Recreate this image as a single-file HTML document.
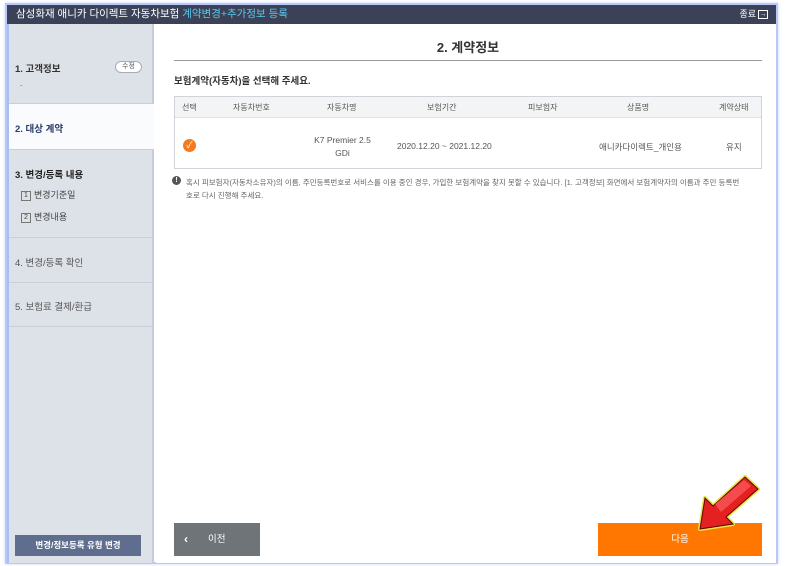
<!DOCTYPE html>
<html><head><meta charset="utf-8"><style>
*{margin:0;padding:0;box-sizing:border-box}
body{width:785px;height:566px;background:#fff;font-family:"Liberation Sans","Noto Sans CJK KR",sans-serif;position:relative;overflow:hidden}
.win{position:absolute;left:5px;top:3px;width:773px;height:561px;border:2px solid #b8c8f8;box-shadow:0 0 3px #c8d4ff}
.hdr{position:absolute;left:7px;top:5px;width:769px;height:19px;background:#3b4258;color:#fff;font-size:10.5px;line-height:19px;padding-left:9px}
.hdr b{font-weight:normal;color:#5ec7e8}
.close{position:absolute;right:8px;top:0;font-size:9px}
.close span{display:inline-block;width:10px;height:9px;border:1px solid #fff;vertical-align:middle;font-size:7px;line-height:7px;text-align:center;margin-left:2px}
.side{position:absolute;left:7px;top:24px;width:147px;height:539px;background:#dde1e8;border-right:2px solid #c7cdd8;border-left:2px solid #a9bdf0}
.sec{position:absolute;left:0;width:145px;border-bottom:1px solid #c9ced8;font-size:9.5px;color:#333}
.sec .t{position:absolute;left:6px;font-weight:bold}
.main{position:absolute;left:156px;top:24px;width:620px;height:539px;background:#fff}
.sm{font-size:9px;color:#444}
.box{display:inline-block;width:10px;height:10px;border:1px solid #777;font-size:7px;line-height:8px;text-align:center;margin-right:3px;vertical-align:middle}
</style></head><body>
<div class="win"></div>
<div class="hdr">삼성화재 애니카 다이렉트 자동차보험 <b>계약변경+추가정보 등록</b><div class="close">종료<span>→</span></div></div>
<div class="side">
 <div class="sec" style="top:0;height:80px"><div class="t" style="top:37px">1. 고객정보</div>
  <div style="position:absolute;left:106px;top:37px;width:27px;height:12px;border:1px solid #aab;border-radius:7px;background:#fff;font-size:7px;text-align:center;line-height:10px;color:#555">수정</div>
  <div style="position:absolute;left:11px;top:55px;font-size:8px">.</div></div>
 <div class="sec" style="top:80px;height:46px;background:#fafbfc"><div class="t" style="top:17px;color:#2b3a6b">2. 대상 계약</div></div>
 <div class="sec" style="top:126px;height:88px"><div class="t" style="top:17px;color:#222">3. 변경/등록 내용</div>
  <div class="sm" style="position:absolute;left:12px;top:38px"><span class="box">1</span>변경기준일</div>
  <div class="sm" style="position:absolute;left:12px;top:60px"><span class="box">2</span>변경내용</div></div>
 <div class="sec" style="top:214px;height:45px"><div class="t" style="top:17px;font-weight:normal;color:#555">4. 변경/등록 확인</div></div>
 <div class="sec" style="top:259px;height:44px"><div class="t" style="top:16px;font-weight:normal;color:#555">5. 보험료 결제/환급</div></div>
 <div style="position:absolute;left:6px;top:511px;width:126px;height:21px;background:#5f6e8e;color:#fff;font-size:8.5px;text-align:center;line-height:21px;font-weight:bold">변경/정보등록 유형 변경</div>
</div>
<div class="main">
 <div style="position:absolute;left:18px;width:588px;top:13px;text-align:center;font-size:13px;font-weight:bold;color:#333">2. 계약정보</div>
 <div style="position:absolute;left:18px;width:588px;top:36px;border-top:1px solid #999"></div>
 <div style="position:absolute;left:18px;top:49px;font-size:9.5px;font-weight:bold;color:#333">보험계약(자동차)을 선택해 주세요.</div>
 <div style="position:absolute;left:18px;top:72px;width:588px;height:73px;border:1px solid #cfd3da;font-size:8px;color:#555">
  <div style="height:21px;background:#f3f4f6;border-bottom:1px solid #dde0e5;position:relative">
   <span style="position:absolute;left:7px;top:5px">선택</span><span style="position:absolute;left:58px;top:5px">자동차번호</span><span style="position:absolute;left:152px;top:5px">자동차명</span><span style="position:absolute;left:252px;top:5px">보험기간</span><span style="position:absolute;left:353px;top:5px">피보험자</span><span style="position:absolute;left:452px;top:5px">상품명</span><span style="position:absolute;left:544px;top:5px">계약상태</span>
  </div>
  <div style="position:absolute;left:8px;top:42px;width:13px;height:13px;border-radius:50%;background:#f47a1f;color:#fff;font-size:9px;text-align:center;line-height:13px">✓</div>
  <div style="position:absolute;left:130px;top:37px;width:75px;text-align:center;font-size:8.5px;line-height:13px">K7 Premier 2.5<br>GDi</div>
  <div style="position:absolute;left:222px;top:44px;font-size:8.5px">2020.12.20 ~ 2021.12.20</div>
  <div style="position:absolute;left:424px;top:44px;font-size:8.5px">애니카다이렉트_개인용</div>
  <div style="position:absolute;left:551px;top:44px;font-size:8.5px">유지</div>
 </div>
 <div style="position:absolute;left:16px;top:152px;width:9px;height:9px;border-radius:50%;background:#555;color:#fff;font-size:7px;text-align:center;line-height:9px;font-weight:bold">!</div>
 <div style="position:absolute;left:30px;top:152px;width:560px;font-size:7.5px;line-height:13px;color:#666">혹시 피보험자(자동차소유자)의 이름, 주민등록번호로 서비스를 이용 중인 경우, 가입한 보험계약을 찾지 못할 수 있습니다. [1. 고객정보] 화면에서 보험계약자의 이름과 주민 등록번호로 다시 진행해 주세요.</div>
 <div style="position:absolute;left:18px;top:499px;width:86px;height:33px;background:#6f7479;color:#fff;font-size:9.5px;line-height:33px"><span style="position:absolute;left:10px;font-size:12px;font-weight:bold">‹</span><span style="position:absolute;left:34px">이전</span></div>
 <div style="position:absolute;left:442px;top:499px;width:164px;height:33px;background:#ff7700;color:#fff;font-size:9.5px;line-height:33px;text-align:center">다음</div>
</div>
<svg style="position:absolute;left:695px;top:474px" width="70" height="60" viewBox="0 0 70 60">
 <path d="M5 55 L10 24 L18 32 L50 3 L63 15 L31 43 L38 50 Z" fill="#e42020" stroke="#e6e84a" stroke-width="4" stroke-linejoin="round"/>
 <path d="M5 55 L10 24 L18 32 L50 3 L63 15 L31 43 L38 50 Z" fill="#e42020" stroke="#600" stroke-width="1"/>
 <path d="M20 30 L49 6 L56 12 L26 38 Z" fill="#ff6a6a" opacity=".6"/>
</svg>
</body></html>
